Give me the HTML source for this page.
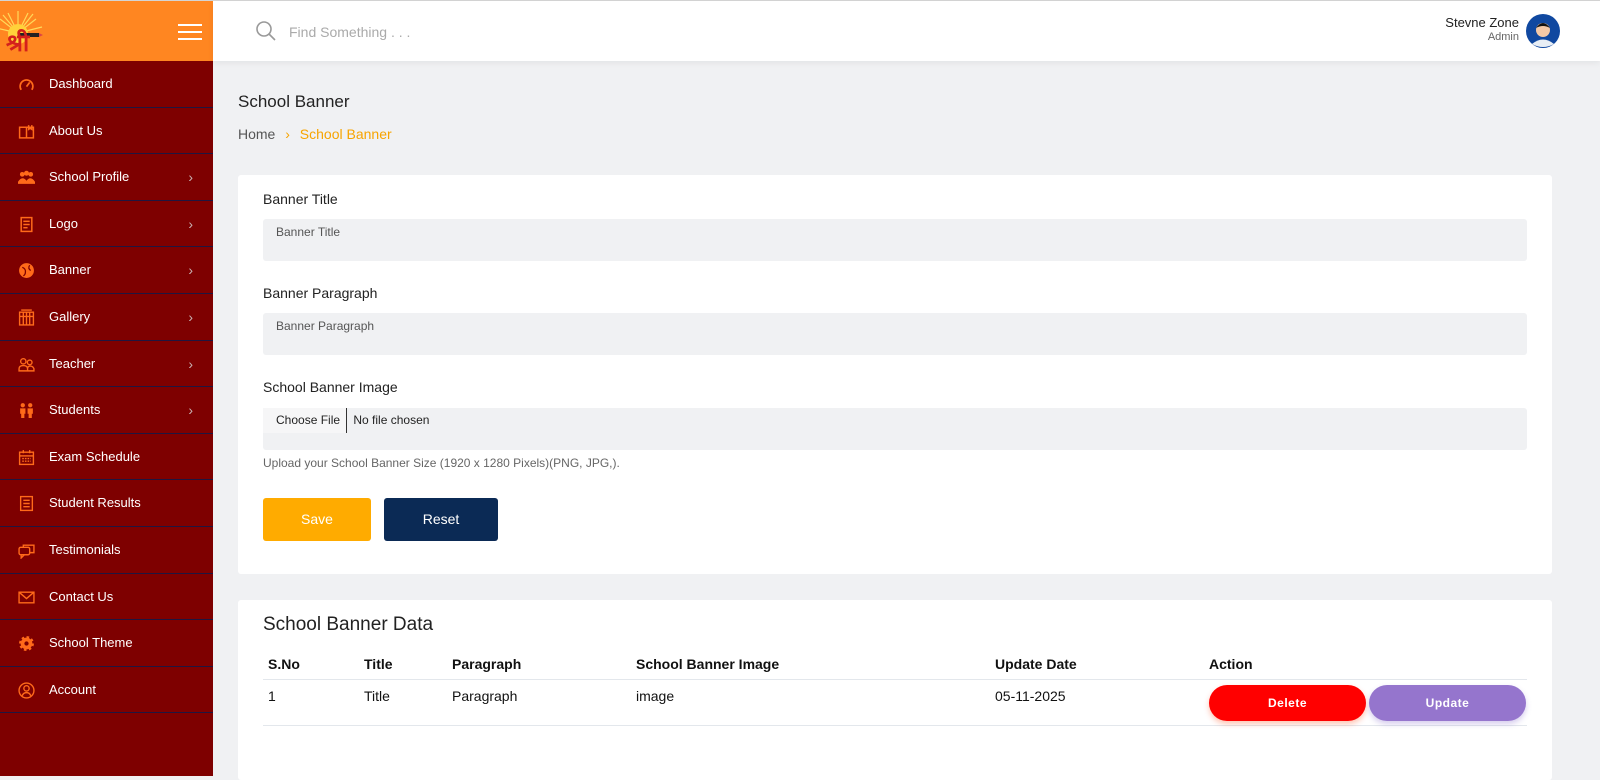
<!DOCTYPE html><html><head><meta charset="utf-8"><style>
*{box-sizing:border-box;margin:0;padding:0}
body{width:1600px;height:775px;overflow:hidden;font-family:"Liberation Sans",Arial,sans-serif;background:#f0f1f3;position:relative;border-top:1px solid #d4d4d4}
.side{position:absolute;left:0;top:0;width:213px;height:775px;background:#7e0000}
.logo{height:60px;background:#ff8621;position:relative}
.ham{position:absolute;left:178px;width:24px;height:2px;background:#fff}
.item{height:46.6px;border-bottom:1px solid #1f1640;position:relative;color:#fff;font-size:13px;line-height:46px;padding-left:49px}
.item svg{position:absolute;left:18px;top:15px;width:17px;height:17px}
.item .ar{position:absolute;right:20px;top:0;color:#c9b4b4;font-size:14px}
.top{position:absolute;left:213px;top:0;right:0;height:60px;background:#fff;box-shadow:0 2px 6px rgba(0,0,0,.06)}
.card{position:absolute;left:238px;width:1314px;background:#fff;border-radius:3px}
.lbl{position:absolute;left:25px;font-size:14px;color:#222}
.inp{position:absolute;left:25px;width:1264px;height:42px;background:#f0f1f3;border-radius:3px;font-size:12px;color:#555;padding:6px 13px}
.btn{position:absolute;color:#fff;font-size:14px;text-align:center;border-radius:3px}
</style></head><body>
<div class="side">
<div class="logo">
<svg width="60" height="60" viewBox="0 0 60 60" style="position:absolute;left:0;top:0">
<g stroke="#ffd95a" stroke-width="1.2"><line x1="18" y1="32" x2="18" y2="10"/><line x1="18" y1="32" x2="8" y2="12"/><line x1="18" y1="32" x2="28" y2="12"/><line x1="18" y1="32" x2="36" y2="18"/><line x1="18" y1="32" x2="0" y2="18"/><line x1="18" y1="32" x2="42" y2="26"/><line x1="18" y1="32" x2="-4" y2="27"/><line x1="18" y1="32" x2="3" y2="14"/><line x1="18" y1="32" x2="33" y2="13"/></g>
<circle cx="18" cy="33" r="10" fill="#ffd23a"/>
<rect x="19" y="32" width="20" height="4" fill="#222"/><polygon points="39,32 43,34 39,36" fill="#d44"/>
<text x="6" y="50" font-size="24" font-weight="bold" fill="#d4201c" font-family="Noto Sans CJK SC, sans-serif">श्री</text></svg>
<div class="ham" style="top:23px"></div><div class="ham" style="top:30px"></div><div class="ham" style="top:37px"></div>
</div>
<div class="item"><svg viewBox="0 0 16 16" fill="none" stroke="#ff6a1a" stroke-width="1.6"><path d="M3 13A6 6 0 1 1 13 13"/><line x1="8" y1="10" x2="11" y2="6"/></svg>Dashboard</div>
<div class="item"><svg viewBox="0 0 16 16" fill="none" stroke="#ff6a1a" stroke-width="1.4"><rect x="1.5" y="4" width="13" height="10"/><line x1="8" y1="4" x2="8" y2="14"/><path d="M10 2v4l1.5-1 1.5 1V2"/></svg>About Us</div>
<div class="item"><svg viewBox="0 0 16 16" fill="#ff6a1a"><circle cx="4" cy="5" r="2.2"/><circle cx="8" cy="4" r="2.4"/><circle cx="12" cy="5" r="2.2"/><path d="M0 12q4-6 8-1 4-5 8 1v2H0z"/></svg>School Profile<span class="ar">›</span></div>
<div class="item"><svg viewBox="0 0 16 16" fill="none" stroke="#ff6a1a" stroke-width="1.4"><rect x="3" y="1.5" width="10" height="13"/><line x1="5" y1="5" x2="11" y2="5"/><line x1="5" y1="8" x2="11" y2="8"/><line x1="5" y1="11" x2="9" y2="11"/></svg>Logo<span class="ar">›</span></div>
<div class="item"><svg viewBox="0 0 16 16"><circle cx="8" cy="8" r="7" fill="#ff6a1a"/><path d="M4 5q3 1 3 4t-2 4M11 3q-2 3 1 5" stroke="#7e0000" stroke-width="1.2" fill="none"/></svg>Banner<span class="ar">›</span></div>
<div class="item"><svg viewBox="0 0 16 16" fill="none" stroke="#ff6a1a" stroke-width="1.3"><rect x="1.5" y="3" width="13" height="12"/><line x1="5" y1="3" x2="5" y2="15"/><line x1="8" y1="3" x2="8" y2="15"/><line x1="11" y1="3" x2="11" y2="15"/><line x1="1.5" y1="7" x2="14.5" y2="7"/><path d="M3 1h10"/></svg>Gallery<span class="ar">›</span></div>
<div class="item"><svg viewBox="0 0 16 16" fill="none" stroke="#ff6a1a" stroke-width="1.3"><circle cx="5" cy="5" r="2.5"/><circle cx="11" cy="6" r="2.2"/><path d="M1 14v-2q0-3 4-3t4 3v2zM9 14v-2q0-2.5 2.5-2.5t3.5 2.5v2z"/></svg>Teacher<span class="ar">›</span></div>
<div class="item"><svg viewBox="0 0 16 16" fill="#ff6a1a"><circle cx="4.5" cy="3" r="2"/><circle cx="11.5" cy="3" r="2"/><path d="M2 6h5v5H6v4H3v-4H2zM9 6h5v5h-1v4h-3v-4H9z"/></svg>Students<span class="ar">›</span></div>
<div class="item"><svg viewBox="0 0 16 16" fill="none" stroke="#ff6a1a" stroke-width="1.3"><rect x="1.5" y="3" width="13" height="11.5"/><line x1="1.5" y1="6.5" x2="14.5" y2="6.5"/><line x1="5" y1="1" x2="5" y2="4"/><line x1="11" y1="1" x2="11" y2="4"/><path d="M4 9h8M4 11.5h8" stroke-dasharray="1.5 1"/></svg>Exam Schedule</div>
<div class="item"><svg viewBox="0 0 16 16" fill="none" stroke="#ff6a1a" stroke-width="1.3"><rect x="2.5" y="1.5" width="11" height="13"/><path d="M5 5h6M5 8h6M5 11h6"/></svg>Student Results</div>
<div class="item"><svg viewBox="0 0 16 16" fill="none" stroke="#ff6a1a" stroke-width="1.3"><rect x="1" y="5" width="10" height="7" rx="1.5"/><path d="M5 5V3h10v7h-4M3 12v3l3-3"/></svg>Testimonials</div>
<div class="item"><svg viewBox="0 0 16 16" fill="none" stroke="#ff6a1a" stroke-width="1.3"><rect x="1" y="3" width="14" height="10"/><path d="M1 3l7 6 7-6"/></svg>Contact Us</div>
<div class="item"><svg viewBox="0 0 16 16"><circle cx="8" cy="8" r="5.5" fill="#ff6a1a" stroke="#ff6a1a" stroke-width="3" stroke-dasharray="2.2 2.1"/><circle cx="8" cy="8" r="2" fill="#7e0000"/></svg>School Theme</div>
<div class="item"><svg viewBox="0 0 16 16" fill="none" stroke="#ff6a1a" stroke-width="1.3"><circle cx="8" cy="8" r="7"/><circle cx="8" cy="6" r="2.5"/><path d="M4 13q1-3 4-3t4 3"/></svg>Account</div>
</div>
<div class="top">
<svg width="22" height="22" style="position:absolute;left:42px;top:19px"><circle cx="9" cy="9" r="7" fill="none" stroke="#999" stroke-width="1.6"/><line x1="14" y1="14" x2="20" y2="20" stroke="#999" stroke-width="1.6"/></svg>
<div style="position:absolute;left:76px;top:23px;font-size:14px;color:#aaa">Find Something . . .</div>
<div style="position:absolute;right:81px;top:14px;font-size:13px;color:#222;text-align:right">Stevne Zone<div style="font-size:11px;color:#666;margin-top:1px">Admin</div></div>
<svg width="34" height="34" style="position:absolute;right:40px;top:13px" viewBox="0 0 34 34"><circle cx="17" cy="17" r="17" fill="#1048a0"/><circle cx="17" cy="16" r="7" fill="#f5c9a6"/><path d="M10 14 Q17 4 24 14 Q17 10 10 14Z" fill="#111"/><path d="M6 30 Q17 21 28 30 Q17 36 6 30Z" fill="#e8eef5"/></svg>
</div>
<div style="position:absolute;left:238px;top:91px;font-size:17px;color:#222">School Banner</div>
<div style="position:absolute;left:238px;top:125px;font-size:14px;color:#555">Home <span style="color:#f7a400;margin:0 6px">›</span> <span style="color:#f7a400">School Banner</span></div>
<div class="card" style="top:174px;height:399px">
<div class="lbl" style="top:16px">Banner Title</div>
<div class="inp" style="top:44px">Banner Title</div>
<div class="lbl" style="top:110px">Banner Paragraph</div>
<div class="inp" style="top:138px">Banner Paragraph</div>
<div class="lbl" style="top:204px">School Banner Image</div>
<div class="inp" style="top:233px;padding:0;font-size:12px;color:#222"><span style="display:inline-block;background:#f6f6f7;padding:6px 6px 6px 13px;border-right:1px solid #333;line-height:13px">Choose File</span> <span style="margin-left:3px">No file chosen</span></div>
<div style="position:absolute;left:25px;top:281px;font-size:12px;color:#666">Upload your School Banner Size (1920 x 1280 Pixels)(PNG, JPG,).</div>
<div class="btn" style="left:25px;top:323px;width:108px;height:43px;line-height:43px;background:#ffab00">Save</div>
<div class="btn" style="left:146px;top:323px;width:114px;height:43px;line-height:43px;background:#0b2a55">Reset</div>
</div>
<div class="card" style="top:599px;height:180px">
<div style="position:absolute;left:25px;top:14px;font-size:19px;color:#222">School Banner Data</div>
<div style="position:absolute;left:25px;top:79px;width:1264px;border-top:1px solid #e3e7ec"></div>
<div style="position:absolute;left:25px;top:125px;width:1264px;border-top:1px solid #e3e7ec"></div>
<div style="font-weight:bold;font-size:14px;color:#111">
<span style="position:absolute;left:30px;top:56px">S.No</span><span style="position:absolute;left:126px;top:56px">Title</span><span style="position:absolute;left:214px;top:56px">Paragraph</span><span style="position:absolute;left:398px;top:56px">School Banner Image</span><span style="position:absolute;left:757px;top:56px">Update Date</span><span style="position:absolute;left:971px;top:56px">Action</span></div>
<div style="font-size:14px;color:#111">
<span style="position:absolute;left:30px;top:88px">1</span><span style="position:absolute;left:126px;top:88px">Title</span><span style="position:absolute;left:214px;top:88px">Paragraph</span><span style="position:absolute;left:398px;top:88px">image</span><span style="position:absolute;left:757px;top:88px">05-11-2025</span></div>
<div class="btn" style="left:971px;top:85px;width:157px;height:36px;line-height:36px;border-radius:18px;background:#ff0000;font-weight:bold;font-size:12px;letter-spacing:.5px;box-shadow:0 3px 6px rgba(255,60,0,.3)">Delete</div>
<div class="btn" style="left:1131px;top:85px;width:157px;height:36px;line-height:36px;border-radius:18px;background:#9575cd;font-weight:bold;font-size:12px;letter-spacing:.5px;box-shadow:0 3px 6px rgba(120,90,200,.3)">Update</div>
</div>
</body></html>
